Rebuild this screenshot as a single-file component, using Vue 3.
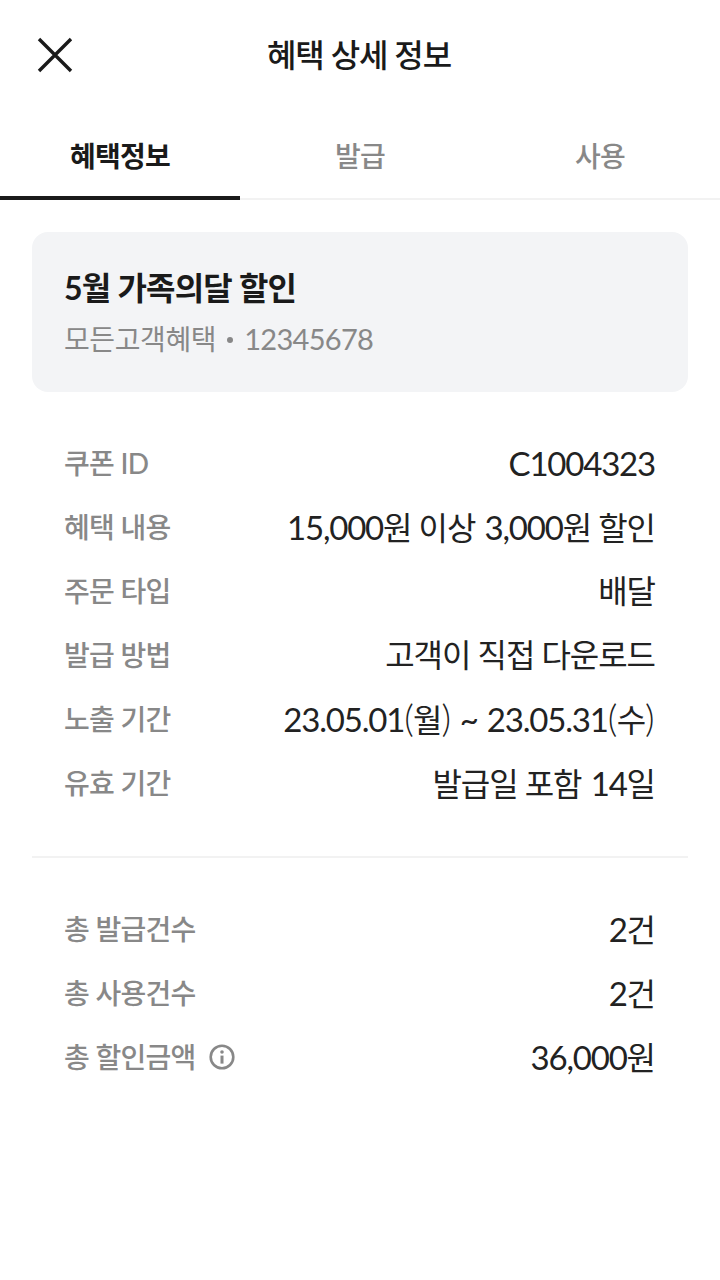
<template>
  <div class="page">
    <header class="top">
      <button class="close">
        <svg width="36" height="36" viewBox="0 0 36 36">
          <path d="M2 2L34 34M34 2L2 34" stroke="#1a1a1a" stroke-width="3.4" fill="none" />
        </svg>
      </button>
      <h1 class="title">혜택 상세 정보</h1>
    </header>

    <nav class="tabs">
      <div v-for="(t, i) in tabs" :key="t" class="tab" :class="{ on: i === 0 }">{{ t }}</div>
    </nav>

    <section class="card">
      <div class="card-title">5월 가족의달 할인</div>
      <div class="card-sub">모든고객혜택<span class="dot"></span><span class="lat">12345678</span></div>
    </section>

    <dl class="rows first">
      <div v-for="r in info" :key="r[0]" class="row">
        <dt>{{ r[0] }}</dt>
        <dd>
          <span v-for="(p, i) in runs(r[1])" :key="i" :class="p.cls">{{ p.text }}</span>
        </dd>
      </div>
    </dl>

    <div class="line"></div>

    <dl class="rows second">
      <div class="row" v-for="r in totals" :key="r[0]">
        <dt>
          {{ r[0] }}
          <svg v-if="r[2]" class="info" width="28" height="28" viewBox="0 0 28 28">
            <circle cx="14" cy="14" r="11.3" fill="none" stroke="#888" stroke-width="2.6" />
            <rect x="12.5" y="12.6" width="3" height="8" fill="#888" />
            <circle cx="14" cy="9" r="1.8" fill="#888" />
          </svg>
        </dt>
        <dd>
          <span v-for="(p, i) in runs(r[1])" :key="i" :class="p.cls">{{ p.text }}</span>
        </dd>
      </div>
    </dl>
  </div>
</template>

<script setup>
const tabs = ['혜택정보', '발급', '사용']

const info = [
  ['쿠폰 ID', 'C1004323'],
  ['혜택 내용', '15,000원 이상 3,000원 할인'],
  ['주문 타입', '배달'],
  ['발급 방법', '고객이 직접 다운로드'],
  ['노출 기간', '23.05.01(월) ~ 23.05.31(수)'],
  ['유효 기간', '발급일 포함 14일'],
]

const totals = [
  ['총 발급건수', '2건'],
  ['총 사용건수', '2건'],
  ['총 할인금액', '36,000원', true],
]

// latin digits sit a little bigger than the hangul next to them, parens bigger still
function runs(text) {
  return text
    .split(/([가-힣 ]*[가-힣]|[()])/)
    .filter(Boolean)
    .map(t => ({
      text: t,
      cls: /[()]/.test(t) ? 'paren' : /[가-힣]/.test(t) ? '' : 'lat',
    }))
}
</script>

<style>
html, body { background: #fff; }
</style>

<style scoped>
.page {
  width: 720px;
  height: 1280px;
  background: #fff;
  font-family: Lato, "Noto Sans CJK KR", sans-serif;
  color: #1a1a1a;
  overflow: hidden;
}
.top {
  position: relative;
  height: 110px;
  display: flex;
  align-items: center;
  justify-content: center;
}
.close {
  position: absolute;
  left: 37px;
  top: 37px;
  width: 36px;
  height: 36px;
  padding: 0;
  border: 0;
  background: none;
}
.close svg { display: block; }
.title {
  margin: 0 2px 0 0;
  font-size: 32px;
  font-weight: 500;
  letter-spacing: -1.1px;
  line-height: 44px;
}
.tabs {
  display: flex;
  height: 90px;
  box-sizing: border-box;
  border-bottom: 2px solid #f2f2f2;
}
.tab {
  flex: 1;
  height: 90px;
  box-sizing: border-box;
  line-height: 92px;
  text-align: center;
  font-size: 28px;
  font-weight: 500;
  color: #888;
  letter-spacing: -0.7px;
}
.tab.on {
  color: #1a1a1a;
  font-weight: 700;
  border-bottom: 4px solid #1a1a1a;
}
.card {
  margin: 32px 32px 0;
  height: 160px;
  box-sizing: border-box;
  padding: 32px 32px 0;
  background: #f3f4f6;
  border-radius: 16px;
}
.card-title {
  font-size: 32px;
  font-weight: 700;
  line-height: 48px;
  letter-spacing: -0.8px;
}
.card-sub {
  margin-top: 3px;
  font-size: 28px;
  line-height: 48px;
  color: #888;
  letter-spacing: -0.4px;
}
.card-sub .lat {
  font-size: 29px;
  letter-spacing: -0.7px;
}
.dot {
  display: inline-block;
  width: 6px;
  height: 6px;
  margin: 0 11px 5px 11px;
  border-radius: 50%;
  background: #888;
  vertical-align: middle;
}
.rows {
  margin: 0;
  padding: 0 65px 0 64px;
}
.rows.first { padding-top: 38px; padding-bottom: 42px; }
.rows.second { padding-top: 38px; }
.row {
  display: flex;
  justify-content: space-between;
  align-items: center;
  height: 64px;
}
dt {
  display: flex;
  align-items: center;
  font-size: 28px;
  font-weight: 500;
  color: #888;
  letter-spacing: -0.7px;
  gap: 12px;
}
.info { margin-top: 2px; }
dd {
  margin: 2px 0 0;
  font-size: 32px;
  line-height: 44px;
  letter-spacing: -1.05px;
  color: #222;
}
dd .lat {
  font-size: 33px;
  letter-spacing: -1.2px;
  word-spacing: 2px;
}
dd .paren {
  font-size: 37px;
  font-weight: 300;
  letter-spacing: -0.6px;
}
dd .paren:last-child { margin-right: 1px; }
.line {
  margin: 0 32px;
  height: 2px;
  background: #f2f2f2;
}
</style>
